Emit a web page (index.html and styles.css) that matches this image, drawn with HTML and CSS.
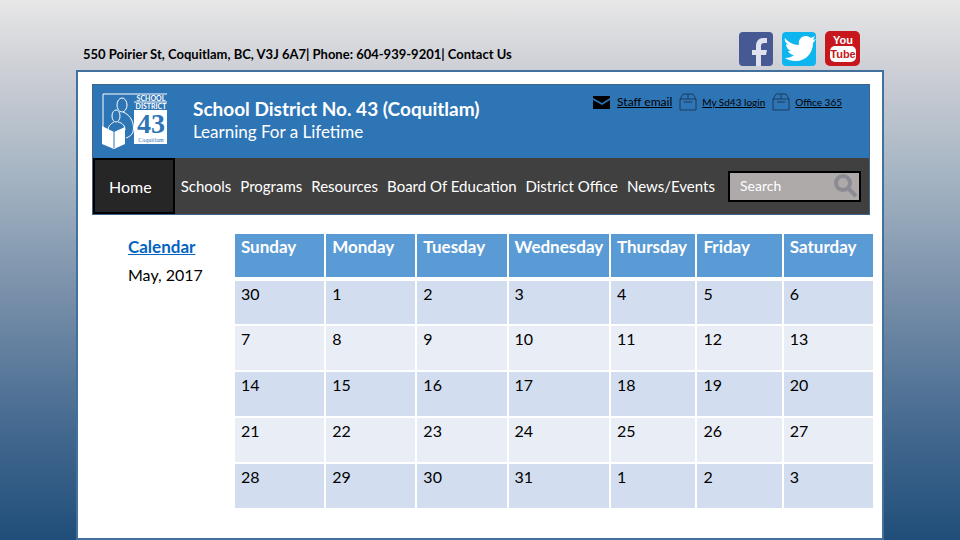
FILE: index.html
```
<!DOCTYPE html>
<html lang="en">
<head>
    <meta charset="UTF-8">
    <meta name="viewport" content="width=device-width, initial-scale=1.0">
    <title>School District No. 43 (Coquitlam)</title>
    <link rel="stylesheet" href="styles.css">
</head>
<body>
    <div class="topbar">
        <p class="contact">550 Poirier St, Coquitlam, BC, V3J 6A7| Phone: 604-939-9201| <a href="#">Contact Us</a></p>
        <div class="social">
            <a href="#" aria-label="Facebook">
                <svg width="34" height="34" viewBox="0 0 34 34">
                    <rect width="34" height="34" rx="4" fill="#475993"/>
                    <path fill="#dfe2ee" d="M17 34V23h-4v-5h4v-4c0-5 3-8 7-8h4v5h-3c-2 0-3 1-3 3v4h6l-1 5h-5v11z"/>
                </svg>
            </a>
            <a href="#" aria-label="Twitter">
                <svg width="34" height="34" viewBox="0 0 34 34">
                    <rect width="34" height="34" rx="4" fill="#0fb5ee"/>
                    <path fill="#fff" d="M3 6c3 4 8 7 14 7-1-5 2-9 7-9 2 0 4 1 5 2l4-2-2 4 3-1-3 4c0 10-7 18-17 18-5 0-8-1-11-3 4 0 7-1 9-3-3 0-5-2-6-4h3c-3-1-5-4-5-7l3 1C4 11 2 9 3 6z"/>
                </svg>
            </a>
            <a href="#" aria-label="YouTube">
                <svg width="35" height="35" viewBox="0 0 35 35">
                    <rect width="35" height="35" rx="5" fill="#c8161d"/>
                    <rect x="5" y="15" width="26" height="16" rx="5" fill="#fff"/>
                    <text class="yt-text" x="18" y="13" fill="#fff">You</text>
                    <text class="yt-text" x="18" y="27" fill="#c8161d">Tube</text>
                </svg>
            </a>
        </div>
    </div>

    <div class="page">
        <header class="banner">
            <div class="brand">
                <svg class="logo" width="68" height="58" viewBox="0 0 68 58">
                    <g fill="none" stroke="#fff" stroke-width="1">
                        <path d="M66 2H2v33"/>
                        <ellipse cx="21" cy="13" rx="5" ry="7"/>
                        <ellipse cx="15" cy="24" rx="4" ry="6"/>
                        <path d="M22 20c8 3 12 12 10 20-1 3-4 5-7 6M13 30c-4 2-6 5-6 8M17 30c5 1 7 4 7 8"/>
                    </g>
                    <path fill="#fff" d="M1 34l12 6 11-5v17l-11 5-12-5z"/>
                    <path stroke="#2e75b6" d="M13 40v16"/>
                    <text class="logo-small" x="50" y="9">SCHOOL</text>
                    <path stroke="#fff" d="M33 10h33"/>
                    <text class="logo-small" x="50" y="17">DISTRICT</text>
                    <rect x="33" y="18" width="33" height="34" fill="#fff"/>
                    <text class="logo-number" x="50" y="41">43</text>
                    <text class="logo-city" x="50" y="50">Coquitlam</text>
                </svg>
                <div class="title">
                    <h1>School District No. 43 (Coquitlam)</h1>
                    <p>Learning For a Lifetime</p>
                </div>
                <ul class="quick">
                    <li class="mail">
                        <svg width="17" height="13" viewBox="0 0 17 13">
                            <path d="M0 0h17v2L9 7 0 2zM0 4l9 5 8-5v9H0z"/>
                        </svg>
                        <a href="#">Staff email</a>
                    </li>
                    <li>
                        <svg class="box" width="18" height="18" viewBox="0 0 18 18">
                            <path d="M1 6l3-5h10l3 5v11H1zM1 6h16M9 1v5M5 9h8"/>
                        </svg>
                        <a href="#">My Sd43 login</a>
                    </li>
                    <li>
                        <svg class="box" width="18" height="18" viewBox="0 0 18 18">
                            <path d="M1 6l3-5h10l3 5v11H1zM1 6h16M9 1v5M5 9h8"/>
                        </svg>
                        <a href="#">Office 365</a>
                    </li>
                </ul>
            </div>
            <nav class="menu">
                <a class="home" href="#">Home</a>
                <div class="links">
                    <a href="#">Schools</a>
                    <a href="#">Programs</a>
                    <a href="#">Resources</a>
                    <a href="#">Board Of Education</a>
                    <a href="#">District Office</a>
                    <a href="#">News/Events</a>
                </div>
                <form class="search">
                    <input type="text" placeholder="Search" aria-label="Search">
                    <button type="button" aria-label="Go">
                        <svg width="24" height="24" viewBox="0 0 24 24">
                            <circle cx="10" cy="9" r="7"/>
                            <path d="M15 14l8 8"/>
                        </svg>
                    </button>
                </form>
            </nav>
        </header>

        <main class="content">
            <div class="side">
                <h2><a href="#">Calendar</a></h2>
                <p>May, 2017</p>
            </div>
            <table class="calendar">
                <thead>
                    <tr>
                        <th>Sunday</th>
                        <th>Monday</th>
                        <th>Tuesday</th>
                        <th class="wide">Wednesday</th>
                        <th class="narrow">Thursday</th>
                        <th class="narrow">Friday</th>
                        <th>Saturday</th>
                    </tr>
                </thead>
                <tbody>
                    <tr><td>30</td><td>1</td><td>2</td><td>3</td><td>4</td><td>5</td><td>6</td></tr>
                    <tr><td>7</td><td>8</td><td>9</td><td>10</td><td>11</td><td>12</td><td>13</td></tr>
                    <tr><td>14</td><td>15</td><td>16</td><td>17</td><td>18</td><td>19</td><td>20</td></tr>
                    <tr><td>21</td><td>22</td><td>23</td><td>24</td><td>25</td><td>26</td><td>27</td></tr>
                    <tr><td>28</td><td>29</td><td>30</td><td>31</td><td>1</td><td>2</td><td>3</td></tr>
                </tbody>
            </table>
        </main>
    </div>
</body>
</html>
```
FILE: styles.css
```
* {
    box-sizing: border-box;
}
body {
    margin: 0;
    padding: 0 76px;
    min-height: 100vh;
    display: flex;
    flex-direction: column;
    font-family: Lato, Carlito, sans-serif;
    font-size: 16px;
    line-height: 20px;
    color: #000;
    background: linear-gradient(#e7e7e7 0%, #cdcfd6 13%, #a6b5c3 32%, #758da8 56%, #476b91 78%, #1f4e79 100%);
}
h1, h2, p, ul {
    margin: 0;
    padding: 0;
}
a {
    color: inherit;
    text-decoration: none;
}

/* Address and social icons */
.topbar {
    display: flex;
    justify-content: space-between;
    align-items: flex-end;
    padding: 31px 24px 4px 7px;
}
.contact {
    font-size: 13px;
    font-weight: bold;
    padding-bottom: 2px;
}
.social {
    display: flex;
    align-items: flex-end;
    gap: 9px;
}
.social svg {
    display: block;
}
.yt-text {
    font-family: "Liberation Sans Narrow", "Liberation Sans", sans-serif;
    font-size: 11px;
    font-weight: bold;
    text-anchor: middle;
}

.page {
    flex: 1;
    background: #fff;
    border: 2px solid #41719c;
    padding: 12px 7px 24px 14px;
}

/* Banner */
.banner {
    margin-right: 5px;
    background: #2e75b6;
    border: 1px solid #41658a;
}
.brand {
    display: flex;
    align-items: flex-start;
    padding: 7px 27px 8px 8px;
}
.title {
    color: #fff;
    padding: 5px 0 0 24px;
}
.title p {
    font-size: 17px;
    line-height: 22px;
}
h1 {
    font-size: 19px;
    line-height: 24px;
}
.quick {
    display: flex;
    gap: 7px;
    margin-left: auto;
    list-style: none;
    font-size: 10px;
}
.quick li {
    display: flex;
    align-items: center;
    gap: 5px;
    height: 20px;
}
.quick .mail {
    gap: 7px;
    font-size: 12px;
}
.quick a {
    text-decoration: underline;
}
.box {
    fill: none;
    stroke: #1f3a5c;
}
.logo text {
    fill: #fff;
    text-anchor: middle;
}
.logo-small {
    font-size: 7px;
    font-weight: bold;
}
.logo .logo-number {
    font-family: "Liberation Serif", serif;
    font-size: 28px;
    font-weight: bold;
    fill: #2e75b6;
}
.logo .logo-city {
    font-family: "Liberation Serif", serif;
    font-size: 6px;
    fill: #2e75b6;
}

/* Menu */
.menu {
    display: flex;
    align-items: center;
    background: #404040;
    color: #fff;
    padding-right: 8px;
}
.home {
    background: #262626;
    border: 2px solid #000;
    padding: 17px 21px 15px 14px;
}
.links {
    display: flex;
    gap: 9px;
    padding-left: 6px;
    font-size: 15px;
    white-space: nowrap;
}
.search {
    display: flex;
    align-items: center;
    width: 133px;
    margin-left: auto;
    background: #aeaaaa;
    border: 2px solid #000;
}
.search input {
    flex: 1;
    min-width: 0;
    padding: 3px 0 4px 10px;
    border: none;
    background: none;
    color: #fff;
    font: inherit;
    font-size: 14px;
}
.search input::placeholder {
    color: #fff;
    opacity: 1;
}
.search button {
    padding: 0 2px;
    border: none;
    background: none;
}
.search svg {
    display: block;
    fill: none;
    stroke: #8b8b93;
    stroke-width: 4;
}

/* Calendar */
.content {
    display: flex;
    align-items: flex-start;
    padding-top: 17px;
}
.side {
    flex: 1;
    padding: 5px 0 0 36px;
}
.side h2 {
    font-size: 17px;
    line-height: 20px;
    color: #0563c1;
}
.side h2 a {
    text-decoration: underline;
}
.side p {
    padding-top: 8px;
}
.calendar {
    width: 82%;
    table-layout: fixed;
    border-collapse: collapse;
}
.calendar th, .calendar td {
    height: 46px;
    padding: 3px 6px;
    text-align: left;
    vertical-align: top;
    border: 2px solid #fff;
}
.calendar th {
    background: #5b9bd5;
    color: #fff;
    font-size: 17px;
    border-bottom-width: 4px;
}
.calendar .wide {
    width: 16%;
}
.calendar .narrow {
    width: 13.5%;
}
.calendar td {
    background: #e9edf6;
}
.calendar tbody tr:nth-child(odd) td {
    background: #d2deef;
}
```
